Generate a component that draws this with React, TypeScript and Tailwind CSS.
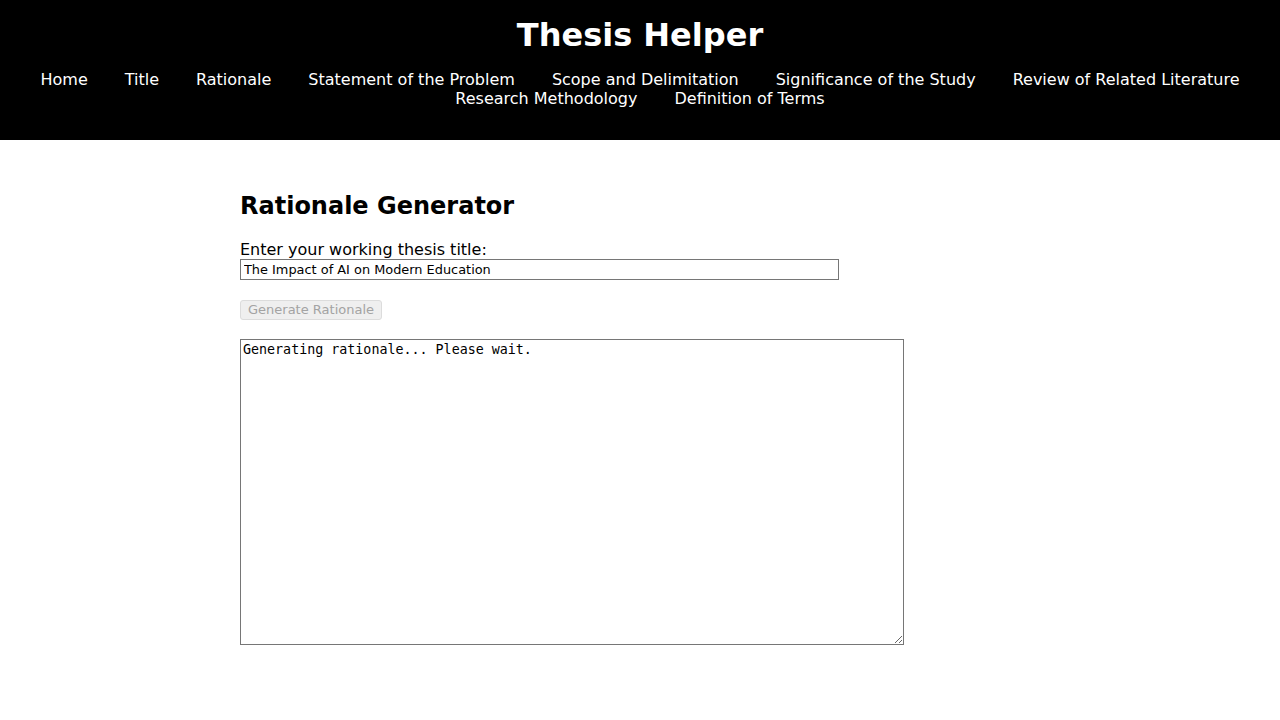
import React from "react";

const links = [
  "Home",
  "Title",
  "Rationale",
  "Statement of the Problem",
  "Scope and Delimitation",
  "Significance of the Study",
  "Review of Related Literature",
  "Research Methodology",
  "Definition of Terms",
];

export default function App() {
  return (
    <div className="min-h-[720px] bg-white text-black" style={{ fontFamily: '"DejaVu Sans", sans-serif' }}>
      <header className="bg-black text-white pt-[17px] pb-[32px] h-[140px] box-border">
        <h1 className="text-center text-[32px] font-bold leading-[37px] m-0">Thesis Helper</h1>
        <nav className="mt-[16px] flex flex-wrap justify-center gap-x-[37px] px-[24px]">
          {links.map((l) => (
            <a key={l} href="#" className="text-white text-[16px] leading-[19px] no-underline">
              {l}
            </a>
          ))}
        </nav>
      </header>
      <main className="w-[800px] mx-auto pt-[52px]">
        <h2 className="text-[24px] font-bold leading-[28px] m-0">Rationale Generator</h2>
        <label className="block mt-[20px] text-[16px] leading-[19px]">Enter your working thesis title:</label>
        <input
          type="text"
          defaultValue="The Impact of AI on Modern Education"
          className="block w-[599px] h-[21px] box-border border border-[#767676] px-[3px] text-[12.9px] leading-[15px] text-black outline-none"
          style={{ fontFamily: '"DejaVu Sans", sans-serif' }}
        />
        <button
          disabled
          className="block mt-[20px] h-[20px] box-border border border-[#dcdcdc] rounded-[3px] bg-[#efefef] text-[#a3a3a3] text-[13px] leading-[16px] px-[7px] whitespace-nowrap"
          style={{ fontFamily: '"DejaVu Sans", sans-serif' }}
        >
          Generate Rationale
        </button>
        <textarea
          readOnly
          defaultValue="Generating rationale... Please wait."
          className="block mt-[19px] w-[664px] h-[306px] box-border border border-[#767676] p-[2px] text-[13.33px] leading-[16px] text-black outline-none resize"
          style={{ fontFamily: '"DejaVu Sans Mono", monospace' }}
        />
      </main>
    </div>
  );
}
